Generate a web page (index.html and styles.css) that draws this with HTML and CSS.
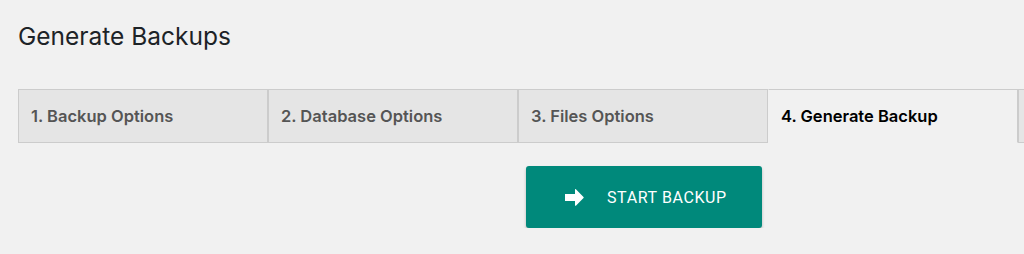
FILE: index.html
```html
<!DOCTYPE html>
<html lang="en">
<head>
    <meta charset="UTF-8">
    <meta name="viewport" content="width=device-width, initial-scale=1.0">
    <title>Generate Backups</title>
    <link rel="stylesheet" href="styles.css">
</head>
<body>
    <div class="wrap">
        <h1>Generate Backups</h1>

        <div class="tabs">
            <div class="tab">1. Backup Options</div>
            <div class="tab">2. Database Options</div>
            <div class="tab">3. Files Options</div>
            <div class="tab active">4. Generate Backup</div>
            <div class="tab"></div>
        </div>

        <div class="actions">
            <button class="btn-start">
                <svg class="icon" width="19" height="17" viewBox="0 0 19 17">
                    <path d="M0 5h10V0.6c0-0.5 0.5-0.7 0.9-0.4l7.6 7.7c0.3 0.3 0.3 0.8 0 1.1l-7.6 7.7c-0.4 0.3-0.9 0.1-0.9-0.4V12H0z" fill="#fff"/>
                </svg>
                <span>START BACKUP</span>
            </button>
        </div>
    </div>
</body>
</html>
```

FILE: styles.css
```css
html, body {
    margin: 0;
    padding: 0;
    background: #f1f1f1;
    overflow: hidden;
}
body {
    font-family: Inter, "Noto Sans", sans-serif;
    color: #1d2327;
}
.wrap {
    width: 1252px;
    padding: 21px 0 0 18px;
}
h1 {
    margin: 0;
    font-size: 24.5px;
    font-weight: 400;
    line-height: 30px;
    color: #1d2327;
}
.tabs {
    display: flex;
    margin-top: 38px;
}
.tab {
    box-sizing: border-box;
    width: 250px;
    height: 54px;
    flex: none;
    display: flex;
    align-items: center;
    padding: 0 12px;
    background: #e5e5e5;
    border: 1px solid #ccc;
    color: #555;
    font-size: 16.5px;
    font-weight: 600;
}
.tab.active {
    background: #f1f1f1;
    border-left-color: #f1f1f1;
    border-bottom-color: #f1f1f1;
    color: #000;
}
.actions {
    display: flex;
    justify-content: center;
    margin-top: 23px;
}
.btn-start {
    width: 236px;
    height: 62px;
    display: flex;
    align-items: center;
    padding: 0 0 0 39px;
    gap: 23px;
    background: #00897b;
    color: #fff;
    border: none;
    border-radius: 3px;
    box-shadow: 0 2px 3px rgba(0,0,0,0.25);
    font-family: Roboto, sans-serif;
    font-size: 16px;
    letter-spacing: 0.6px;
    cursor: pointer;
}
.icon {
    display: block;
    flex: none;
}
```
